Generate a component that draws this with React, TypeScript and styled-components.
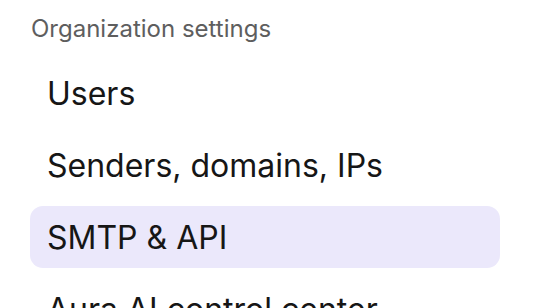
import React from "react";
import styled, { createGlobalStyle } from "styled-components";

const Global = createGlobalStyle`
  html, body { margin: 0; padding: 0; background: #ffffff; }
  body { font-family: Inter, "Noto Sans", sans-serif; -webkit-font-smoothing: antialiased; }
`;

const Sidebar = styled.nav`
  width: 470px;
  padding: 14px 0 0 30px;
  display: flex;
  flex-direction: column;
`;

const SectionTitle = styled.div`
  font-size: 24px;
  line-height: 30px;
  color: #5e5e5e;
  padding-left: 1px;
  margin-bottom: 18px;
`;

const List = styled.ul`
  list-style: none;
  margin: 0;
  padding: 0;
  display: flex;
  flex-direction: column;
  gap: 10px;
`;

const Item = styled.li<{ $active?: boolean }>`
  height: 62px;
  display: flex;
  align-items: center;
  padding: 0 17px;
  border-radius: 13px;
  font-size: 32px;
  color: #161616;
  background: ${(p) => (p.$active ? "#ebe8fb" : "transparent")};
  white-space: nowrap;
`;

const items = ["Users", "Senders, domains, IPs", "SMTP & API", "Aura AI control center"];

export default function App() {
  return (
    <>
      <Global />
      <Sidebar>
        <SectionTitle>Organization settings</SectionTitle>
        <List>
          {items.map((t) => (
            <Item key={t} $active={t === "SMTP & API"}>
              {t}
            </Item>
          ))}
        </List>
      </Sidebar>
    </>
  );
}
